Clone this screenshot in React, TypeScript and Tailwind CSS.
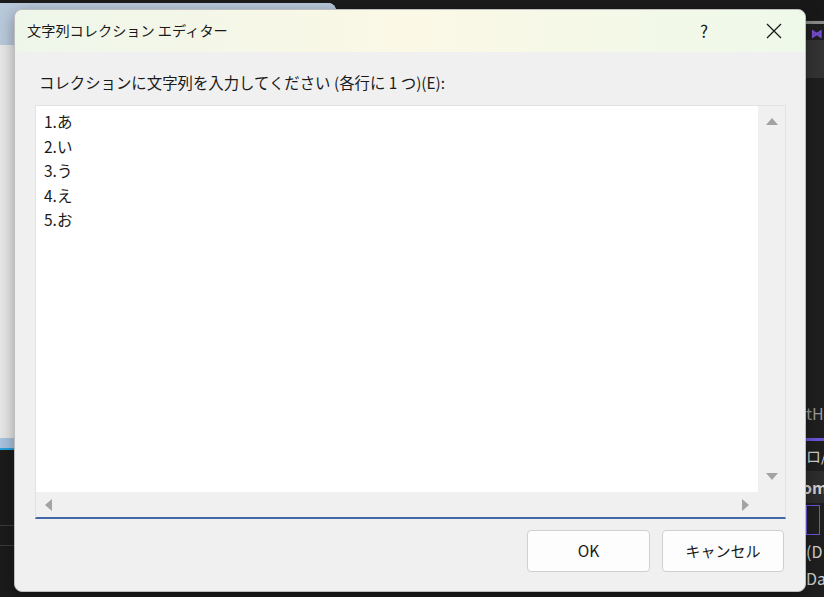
import React from 'react';

const lines = ['1.あ', '2.い', '3.う', '4.え', '5.お'];

const font = { fontFamily: '"Noto Sans CJK JP", "Noto Sans", sans-serif' };

// 背景のウィンドウ（ダイアログの後ろ）
function Backdrop() {
  return (
    <>
      <div className="absolute left-0 top-[3px] w-[336px] h-[437px] rounded-tr-[8px] bg-[#e7e7e7] overflow-hidden">
        <div className="h-[42px] bg-[#b9c9dc]" />
      </div>
      <div className="absolute left-0 top-[438px] w-[40px] h-[10px] bg-[#a9c3de]" />
      <div className="absolute left-0 top-[448px] w-[14px] h-[2px] bg-[#2aa0d8]" />
      <div className="absolute left-0 top-[525px] w-[14px] h-px bg-[#3a3a3a]" />
      <div className="absolute left-0 top-[545px] w-[14px] h-px bg-[#3a3a3a]" />

      <div className="absolute left-[800px] top-0 w-[24px] h-[597px] bg-[#1f1f1f] overflow-hidden text-[#cfcfcf]" style={font}>
        <div className="h-[20px] bg-[#181818]" />
        <div className="h-[3px] bg-[#8a8a8a] mt-px" />
        <div className="h-[16px] flex items-end pl-[12px]">
          <svg width="14" height="12" viewBox="0 0 14 12">
            <path d="M1 3 L10 9 L10 3 L1 9 Z" fill="none" stroke="#7a4fd6" strokeWidth="2.4" />
          </svg>
        </div>
        <div className="h-[38px] bg-[#333333]" />
        <div className="h-[320px]" />
        <div className="h-[30px] text-[16px] text-[#9a9a9a] leading-[30px] pl-[6px] whitespace-nowrap">tH</div>
        <div className="h-[3px] bg-[#6a55d8] mt-[10px]" />
        <div className="h-[30px] text-[15px] leading-[30px] pl-[6px] whitespace-nowrap">ロ/V</div>
        <div className="h-[32px] bg-[#2d2d2d] text-[16px] font-bold leading-[32px] pl-[2px] whitespace-nowrap">om</div>
        <div className="h-[34px] flex items-center pl-[6px]">
          <div className="w-[14px] h-[30px] border border-[#6a55d8]" />
        </div>
        <div className="h-[28px] text-[16px] leading-[28px] pl-[6px] whitespace-nowrap">(D</div>
        <div className="h-[26px] text-[16px] leading-[26px] pl-[6px] whitespace-nowrap">Da</div>
      </div>
    </>
  );
}

function ScrollArrow({ dir }: { dir: 'up' | 'down' | 'left' | 'right' }) {
  const paths = {
    up: 'M0 7 L6 0 L12 7 Z',
    down: 'M0 0 L12 0 L6 7 Z',
    left: 'M7 0 L7 12 L0 6 Z',
    right: 'M0 0 L7 6 L0 12 Z',
  };
  const vertical = dir === 'up' || dir === 'down';
  return (
    <svg width={vertical ? 12 : 7} height={vertical ? 7 : 12} viewBox={vertical ? '0 0 12 7' : '0 0 7 12'}>
      <path d={paths[dir]} fill="#a3a3a3" />
    </svg>
  );
}

export default function App() {
  return (
    <div className="relative w-[824px] h-[597px] bg-[#1b1b1b] overflow-hidden" style={font}>
      <Backdrop />

      <div className="absolute left-[14px] top-[9px] w-[792px] h-[583px] flex flex-col rounded-[8px] bg-[#f0f0f0] border border-[#bdbdbd] shadow-[0_4px_16px_rgba(0,0,0,0.35)] overflow-hidden">
        {/* タイトルバー */}
        <div className="h-[42px] shrink-0 flex items-center bg-linear-to-r from-[#eef6ea] via-[#fbf8e6] to-[#eef9ea]">
          <span className="pl-[12px] text-[14.2px] text-[#1a1a1a] flex-1">文字列コレクション エディター</span>
          <div className="w-[46px] h-full flex items-center justify-center text-[17px] text-[#1a1a1a] mr-[24px]">?</div>
          <div className="w-[46px] h-full flex items-center justify-center mr-[8px]">
            <svg width="16" height="16" viewBox="0 0 16 16">
              <path d="M1 1 L15 15 M15 1 L1 15" stroke="#1a1a1a" strokeWidth="1.3" />
            </svg>
          </div>
        </div>

        {/* 本体 */}
        <div className="flex-1 flex flex-col pt-[20px] pl-[20px] pr-[19px]">
          <label className="text-[15.4px] leading-[20px] text-[#1a1a1a] pl-[4px]">
            コレクションに文字列を入力してください (各行に 1 つ)(E):
          </label>

          <div className="mt-[13px] h-[414px] flex flex-col border-t border-x border-[#e2e2e2] border-b-2 border-b-[#4467a8]">
            <div className="flex-1 flex min-h-0">
              <div className="flex-1 bg-white pl-[8px] pt-[3px] text-[15.5px] leading-[24.6px] text-[#1a1a1a]">
                {lines.map((l) => (
                  <div key={l}>{l}</div>
                ))}
              </div>
              <div className="w-[27px] flex flex-col items-center justify-between py-[12px] bg-[#f0f0f0]">
                <ScrollArrow dir="up" />
                <ScrollArrow dir="down" />
              </div>
            </div>
            <div className="h-[25px] flex">
              <div className="flex-1 flex items-center justify-between px-[9px] bg-[#f0f0f0]">
                <ScrollArrow dir="left" />
                <ScrollArrow dir="right" />
              </div>
              <div className="w-[27px] bg-[#f0f0f0]" />
            </div>
          </div>

          <div className="mt-[11px] flex justify-end gap-[12px] pr-[2px]">
            <button className="w-[123px] h-[42px] rounded-[4px] bg-[#fdfdfd] border border-[#d0d0d0] text-[15.5px] text-[#1a1a1a]">
              OK
            </button>
            <button className="w-[122px] h-[42px] rounded-[4px] bg-[#fdfdfd] border border-[#d0d0d0] text-[15px] text-[#1a1a1a]">
              キャンセル
            </button>
          </div>
        </div>
      </div>
    </div>
  );
}
